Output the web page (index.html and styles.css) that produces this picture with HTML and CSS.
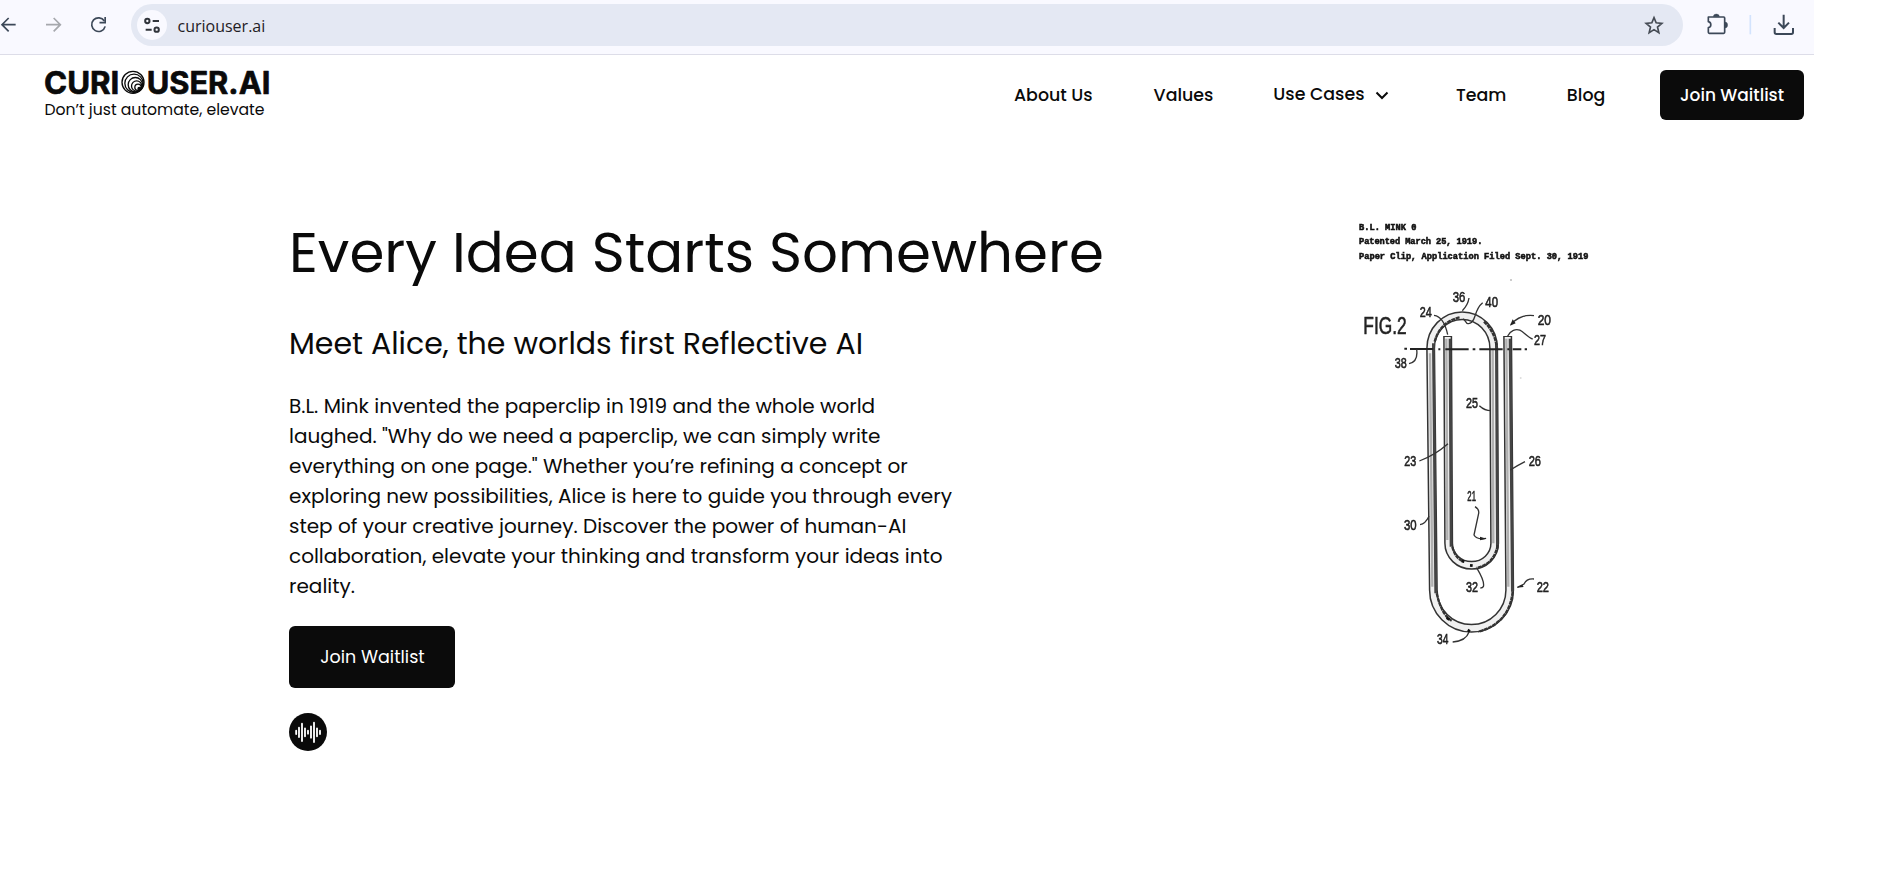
FILE: index.html
```html
<!DOCTYPE html>
<html lang="en">
<head>
<meta charset="utf-8">
<title>Curiouser.AI</title>
<link rel="stylesheet" href="styles.css">
</head>
<body>
<div class="browser">
  <svg class="nav-icons" viewBox="0 0 393 162" fill="none" stroke-width="5">
    <path d="M47 74H8M26 54L6 74l20 20" stroke="#3c4858"/>
    <path d="M138 74h41M161 54l20 20-20 20" stroke="#a6a8ad"/>
    <path d="M313 63A20.500 20.500 0 1 0 315.500 79" stroke="#3c4858"/><path d="M315.500 51v17h-17" stroke="#3c4858"/>
  </svg>
  <div class="address">
    <span class="site">
      <svg viewBox="0 0 90 90" width="30" height="30" fill="none" stroke="#30343b" stroke-width="6"><circle cx="31" cy="33" r="6.500"/><path d="M47 33h19M26 59h18"/><circle cx="59" cy="59" r="6.500"/></svg>
    </span>
    <span class="url">curiouser.ai</span>
    <svg class="star" viewBox="0 0 60 60" fill="none" stroke="#454b54" stroke-width="5"><path d="M30 8l6.500 15.500 17 1.500-13 11 4 17L30 44l-14.500 9 4-17-13-11 17-1.500z"/></svg>
  </div>
  <svg class="tools" viewBox="0 0 393 162" fill="none" stroke="#3c4858" stroke-width="5">
    <path d="M76 51h46q3 0 3 3v43q0 3-3 3H79q-3 0-3-3V83c10-1 10-16 0-18z" stroke-linejoin="round"/>
    <path d="M91 50a9 8 0 0 1 18 0zM126 66a8 9 0 0 1 0 18z" fill="#3c4858" stroke-width="1"/>
    <path d="M202 45v58" stroke="#d3e3fd"/>
    <path d="M302 44v38M286 68l16 16 16-16M275 84v13q0 5 5 5h45q5 0 5-5V84" stroke-width="6"/>
  </svg>
</div>
<header class="header">
  <a class="brand">
    <svg class="logo" viewBox="0 0 690 90">
      <text x="-3" y="73" textLength="226" lengthAdjust="spacingAndGlyphs">CURI</text>
      <g fill="none" stroke="#0a0a0a" stroke-width="4"><circle cx="264" cy="37" r="33"/><circle cx="267" cy="40" r="27.500"/><circle cx="271" cy="44" r="21.500"/><circle cx="275" cy="48" r="15.500"/><circle cx="279" cy="52" r="9.500"/><circle cx="283" cy="56" r="4" fill="#0a0a0a"/></g>
      <text x="305" y="73" textLength="371" lengthAdjust="spacingAndGlyphs">USER.AI</text>
    </svg>
    <span class="tagline">Don’t just automate, elevate</span>
  </a>
  <nav class="menu">
    <a>About Us</a>
    <a class="values">Values</a>
    <a class="cases">Use Cases</a><svg class="chevron" viewBox="0 0 14 9" fill="none" stroke="#0a0a0a" stroke-width="2"><path d="M1.500 1.500L7 7l5.500-5.500"/></svg>
    <a class="team">Team</a>
    <a class="blog">Blog</a>
  </nav>
  <a class="button small">Join Waitlist</a>
</header>
<main class="hero">
  <section class="copy">
    <h1>Every Idea Starts Somewhere</h1>
    <h2>Meet Alice, the worlds first Reflective AI</h2>
    <p>B.L. Mink invented the paperclip in 1919 and the whole world laughed. "Why do we need a paperclip, we can simply write everything on one page." Whether you’re refining a concept or exploring new possibilities, Alice is here to guide you through every step of your creative journey. Discover the power of human-AI collaboration, elevate your thinking and transform your ideas into reality.</p>
    <a class="button large">Join Waitlist</a>
    <svg class="voice" viewBox="0 0 114 114"><circle cx="57" cy="57" r="57" fill="#0a0a0a"/><path d="M21.500 53v10M30 44v28M39 32v52M48 46v24M57 53v9M66 40v34M75 29v58M84 46v24M93 53v10" stroke="#fff" stroke-width="5.500" stroke-linecap="round"/></svg>
  </section>
  <svg class="patent" viewBox="0 0 810 1350">
    <g class="caption">
      <text x="57" y="60" textLength="172">B.L. MINK 0</text>
      <text x="57" y="103" textLength="370">Patented March 25, 1919.</text>
      <text x="57" y="147" textLength="688">Paper Clip, Application Filed Sept. 30, 1919</text>
    </g>
    <g fill="none">
      <path class="wire-edge" d="M503 378L509 1140A114.500 115 0 0 1 280 1140L272 415A94.500 98 0 0 1 461 415L464 1000A69 66 0 0 1 326 1000L323 378"/>
      <path class="wire-fill" d="M503 381L509 1140A114.500 115 0 0 1 280 1140L272 415A94.500 98 0 0 1 461 415L464 1000A69 66 0 0 1 326 1000L323 381"/>
      <path class="tone" d="M270 430L277 1130M319 386L322 990M458 420L460 1000M499 386L505 1130"/>
      <path class="shade" d="M280 400L287 1150M330 386L333 1010M469 400L472 1015M510 386L517 1145"/>
      <path class="rough" d="M284 395Q300 335 360 322M432 335Q464 365 470 410M290 1150Q305 1215 335 1232M518 1145Q508 1240 415 1265M337 1010Q345 1045 372 1055M473 1005Q463 1062 410 1074"/>
      <path d="M193 416h8M210 417h70M295 418h6M316 418h70M398 418h8M418 418h70M502 418h6M518 418h26M554 418h7" stroke="#222" stroke-width="6"/>
      <path class="leader" d="M387 264Q384 285 367 302M428 278Q413 290 405 318Q397 345 381 340L370 326M282 316Q312 320 323 374M582 317Q540 312 512 344M578 387C555 380 545 350 520 361Q510 365 503 378M230 418Q235 455 207 461M418 587Q434 602 453 602M238 753Q285 735 324 701M555 755Q535 765 511 780M240 944Q256 942 267 919M405 890Q418 898 416 910L402 975Q410 990 438 985M411 1075Q435 1115 430 1130Q428 1134 421 1134M582 1107Q560 1105 552 1122L532 1132M338 1296Q378 1293 387 1266"/>
      <path d="M510 347l8-19 9 12zM440 986l-20-6v11zM530 1133l17-9 4 7z" fill="#222"/>
      <path d="M320 1223l8 6M383 1260l7 4M390 1066l8 1M365 1053l8 2" stroke="#111" stroke-width="8"/>
    </g>
    <g class="label">
      <text class="figure" x="70" y="371" textLength="130" lengthAdjust="spacingAndGlyphs">FIG.2</text>
      <text x="338" y="276" textLength="38" lengthAdjust="spacingAndGlyphs">36</text><text x="436" y="292" textLength="38" lengthAdjust="spacingAndGlyphs">40</text>
      <text x="239" y="321" textLength="36" lengthAdjust="spacingAndGlyphs">24</text><text x="593" y="346" textLength="40" lengthAdjust="spacingAndGlyphs">20</text>
      <text x="582" y="405" textLength="36" lengthAdjust="spacingAndGlyphs">27</text><text x="164" y="473" textLength="36" lengthAdjust="spacingAndGlyphs">38</text>
      <text x="378" y="594" textLength="36" lengthAdjust="spacingAndGlyphs">25</text><text x="193" y="768" textLength="36" lengthAdjust="spacingAndGlyphs">23</text>
      <text x="566" y="768" textLength="37" lengthAdjust="spacingAndGlyphs">26</text><text x="382" y="873" textLength="26" lengthAdjust="spacingAndGlyphs">21</text>
      <text x="192" y="960" textLength="38" lengthAdjust="spacingAndGlyphs">30</text><text x="378" y="1145" textLength="36" lengthAdjust="spacingAndGlyphs">32</text>
      <text x="590" y="1145" textLength="37" lengthAdjust="spacingAndGlyphs">22</text><text x="291" y="1302" textLength="34" lengthAdjust="spacingAndGlyphs">34</text>
    </g>
    <circle cx="513" cy="210" r="3" fill="#bbb"/><circle cx="542" cy="504" r="3" fill="#ddd"/>
  </svg>
</main>
</body>
</html>
```
FILE: styles.css
```css
* { box-sizing: border-box; }
body { margin: 0; background: #fff; color: #0a0a0a; font-family: Poppins, Inter, sans-serif; }
h1, h2, p { margin: 0; font-weight: 400; }
.browser { width: 1814px; height: 55px; display: flex; background: #f9f9ff; border-bottom: 1px solid #dddde8; }
.nav-icons, .tools { width: 131px; height: 54px; flex: none; }
.address { width: 1552px; height: 42px; margin-top: 4px; padding: 0 19px 0 6px; border-radius: 21px; background: #e4e8f3; display: flex; align-items: center; }
.site { width: 30px; height: 30px; border-radius: 50%; background: #f9f9ff; }
.url { flex: 1; margin: 2px 0 0 10.500px; font: 16px "Open Sans", sans-serif; color: #1f2024; }
.star { width: 20px; height: 20px; }
.header { width: 1804px; height: 80px; padding-left: 45px; display: flex; }
.brand { width: 969px; display: flex; flex-direction: column; }
.logo { width: 230px; height: 30px; margin-top: 15px; overflow: visible; font: 700 93px Inter, sans-serif; fill: #0a0a0a; stroke: #0a0a0a; stroke-width: 2; stroke-linejoin: round; }
.tagline { align-self: flex-start; font-size: 15.650px; line-height: 24px; margin: -2px 0 0 -.5px; white-space: nowrap; }
.menu { display: flex; width: 646px; height: 24px; margin-top: 28px; font-size: 17.400px; line-height: 24px; font-weight: 500; white-space: nowrap; }
.values { margin-left: 61px; }
.cases { margin: -1px 0 0 60px; }
.chevron { width: 14px; height: 9px; margin: 8px 0 0 11px; }
.team { margin-left: 66.500px; }
.blog { margin-left: 60.500px; }
.button { display: flex; align-items: center; justify-content: center; color: #fff; background: #0b0b0b; border-radius: 6px; white-space: nowrap; }
.small { width: 144px; height: 50px; margin-top: 15px; font-size: 17px; font-weight: 500; }
.hero { display: flex; padding: 75px 0 0 289px; }
.copy { width: 1051px; display: flex; flex-direction: column; align-items: flex-start; }
h1 { font-size: 56.250px; line-height: 84px; margin-top: 1px; white-space: nowrap; }
h2 { font-size: 30px; line-height: 44px; margin-top: 27px; white-space: nowrap; }
p { width: 670px; font-size: 20px; line-height: 30px; margin-top: 25px; }
.large { width: 166px; height: 62px; margin-top: 25px; padding-left: 1px; font-size: 17.500px; }
.voice { width: 38px; height: 38px; margin-top: 25px; }
.patent { width: 270px; height: 450px; filter: blur(.35px); }
.caption { font: bold 26px "Liberation Mono", monospace; fill: #111; stroke: #111; stroke-width: 1.600; }
.label { font: 46px "Liberation Sans", sans-serif; fill: #222; stroke: #222; stroke-width: 1.800; }
.figure { font-size: 74px; }
.wire-edge { stroke: #333; stroke-width: 27; }
.wire-fill { stroke: #f0f0f0; stroke-width: 18; }
.shade { stroke: #444; stroke-width: 8; }
.tone { stroke: #b0b0b0; stroke-width: 7; }
.rough { stroke: #333; stroke-width: 7; stroke-dasharray: 12 2; }
.leader { stroke: #333; stroke-width: 4; }
```
